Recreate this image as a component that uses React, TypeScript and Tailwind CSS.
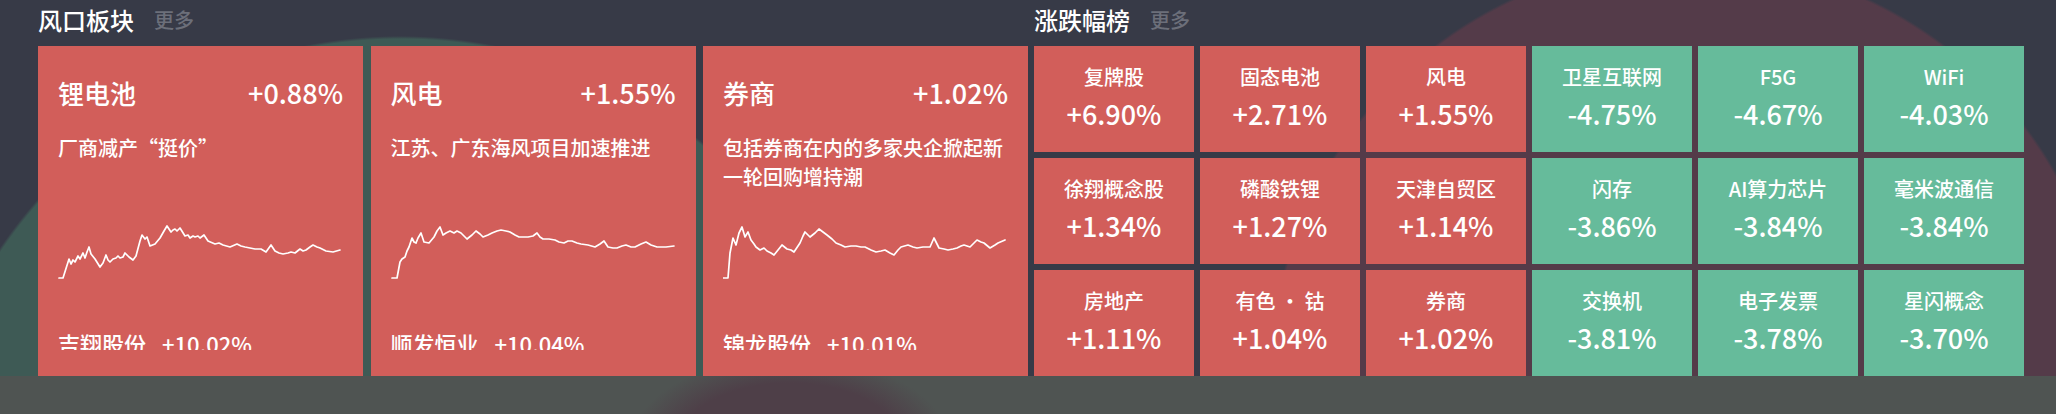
import React from "react";

type Card = {
  name: string;
  pct: string;
  desc: string;
  stock: string;
  stockPct: string;
  pts: [number, number][];
};

const chart1: [number, number][] = [
  [21, 232], [25, 232], [31, 213], [33, 218], [35, 214], [37, 216], [40, 210], [42, 213], [45, 207], [47, 212], [49, 206], [51, 201], [53, 208], [57, 213], [62, 221], [65, 217], [68, 209], [70, 214], [72, 216], [75, 213], [78, 212], [80, 210], [82, 212], [85, 211], [87, 207], [91, 211], [95, 214], [98, 210], [102, 195], [104, 189], [107, 193], [109, 191], [112, 200], [117, 198], [122, 192], [126, 185], [129, 180], [131, 183], [133, 186], [135, 184], [137, 183], [139, 185], [142, 182], [147, 190], [150, 189], [152, 192], [155, 190], [157, 191], [160, 190], [162, 192], [166, 189], [170, 195], [177, 198], [181, 197], [185, 199], [192, 201], [199, 198], [203, 200], [207, 201], [212, 202], [217, 203], [223, 203], [228, 206], [233, 199], [237, 205], [241, 207], [245, 208], [250, 207], [253, 206], [257, 207], [262, 203], [265, 205], [268, 204], [272, 201], [275, 199], [279, 201], [282, 202], [288, 205], [295, 206], [302, 204],
];

const chart2: [number, number][] = [
  [21, 232], [26, 232], [29, 216], [31, 213], [34, 211], [36, 205], [38, 201], [41, 192], [43, 196], [45, 197], [47, 192], [50, 187], [53, 196], [58, 197], [63, 191], [66, 185], [69, 181], [72, 189], [75, 187], [79, 185], [83, 187], [86, 185], [90, 187], [96, 193], [101, 189], [105, 185], [109, 188], [112, 191], [117, 189], [121, 187], [126, 185], [130, 184], [135, 185], [139, 186], [144, 189], [148, 191], [153, 191], [157, 191], [162, 190], [166, 187], [169, 191], [172, 193], [178, 193], [184, 194], [188, 196], [193, 197], [197, 195], [201, 195], [206, 197], [210, 198], [217, 199], [224, 201], [229, 198], [233, 195], [237, 201], [242, 202], [246, 202], [251, 200], [255, 199], [260, 201], [264, 201], [270, 198], [275, 196], [280, 199], [286, 201], [291, 201], [295, 201], [303, 200],
];

const chart3: [number, number][] = [
  [19, 232], [25, 232], [27, 207], [30, 192], [33, 199], [36, 187], [39, 181], [42, 191], [45, 186], [48, 194], [51, 198], [53, 201], [57, 204], [61, 202], [64, 205], [68, 207], [71, 209], [75, 204], [79, 199], [84, 203], [88, 204], [91, 206], [95, 200], [97, 197], [100, 190], [102, 186], [105, 189], [107, 191], [112, 187], [116, 183], [120, 186], [124, 189], [129, 193], [133, 197], [138, 199], [142, 201], [148, 200], [153, 200], [158, 201], [162, 201], [168, 204], [173, 206], [178, 205], [182, 204], [187, 207], [191, 209], [195, 204], [198, 201], [205, 199], [210, 201], [214, 202], [220, 201], [227, 201], [231, 192], [236, 202], [241, 203], [245, 204], [250, 203], [254, 202], [258, 200], [261, 199], [267, 201], [271, 197], [274, 194], [278, 196], [281, 197], [287, 202], [292, 199], [295, 197], [302, 194],
];

const cards: Card[] = [
  { name: "锂电池", pct: "+0.88%", desc: "厂商减产“挺价”", stock: "吉翔股份", stockPct: "+10.02%", pts: chart1 },
  { name: "风电", pct: "+1.55%", desc: "江苏、广东海风项目加速推进", stock: "顺发恒业", stockPct: "+10.04%", pts: chart2 },
  { name: "券商", pct: "+1.02%", desc: "包括券商在内的多家央企掀起新一轮回购增持潮", stock: "锦龙股份", stockPct: "+10.01%", pts: chart3 },
];

type Tile = { name: string; pct: string; up: boolean };

const tiles: Tile[] = [
  { name: "复牌股", pct: "+6.90%", up: true },
  { name: "固态电池", pct: "+2.71%", up: true },
  { name: "风电", pct: "+1.55%", up: true },
  { name: "卫星互联网", pct: "-4.75%", up: false },
  { name: "F5G", pct: "-4.67%", up: false },
  { name: "WiFi", pct: "-4.03%", up: false },
  { name: "徐翔概念股", pct: "+1.34%", up: true },
  { name: "磷酸铁锂", pct: "+1.27%", up: true },
  { name: "天津自贸区", pct: "+1.14%", up: true },
  { name: "闪存", pct: "-3.86%", up: false },
  { name: "AI算力芯片", pct: "-3.84%", up: false },
  { name: "毫米波通信", pct: "-3.84%", up: false },
  { name: "房地产", pct: "+1.11%", up: true },
  { name: "有色 · 钴", pct: "+1.04%", up: true },
  { name: "券商", pct: "+1.02%", up: true },
  { name: "交换机", pct: "-3.81%", up: false },
  { name: "电子发票", pct: "-3.78%", up: false },
  { name: "星闪概念", pct: "-3.70%", up: false },
];

function Spark({ pts }: { pts: [number, number][] }) {
  const d = pts.map(([x, y]) => `${x - 20},${y}`).join(" ");
  return (
    <svg className="block mt-[5px] h-[100px] w-[285px]" viewBox="0 150 285 100">
      <polyline points={d} fill="none" stroke="#ffffff" strokeWidth="1.7" strokeLinejoin="round" strokeLinecap="round" />
    </svg>
  );
}

function SectorCard({ c }: { c: Card }) {
  return (
    <div className="h-[330px] bg-[#d25e5a] px-[20px] pt-[29px] text-white flex flex-col">
      <div className="h-[36px] flex items-center justify-between">
        <span className="text-[26px] leading-[36px]">{c.name}</span>
        <span className="text-[27px] leading-[36px]">{c.pct}</span>
      </div>
      <div className="mt-[22px] h-[58px] text-[20px] leading-[29px]">{c.desc}</div>
      <Spark pts={c.pts} />
      <div className="mt-[32px] h-[22px] overflow-hidden text-[22px] leading-[30px] whitespace-nowrap">
        <span>{c.stock}</span>
        <span className="ml-[16px]">{c.stockPct}</span>
      </div>
    </div>
  );
}

function RankTile({ t }: { t: Tile }) {
  return (
    <div className={`h-[106px] flex flex-col items-center text-white ${t.up ? "bg-[#d25e5a]" : "bg-[#66bb9b]"}`}>
      <div className="mt-[16px] text-[20px] leading-[30px] whitespace-nowrap">{t.name}</div>
      <div className="mt-[4px] text-[27px] leading-[36px]">{t.pct}</div>
    </div>
  );
}

function Header({ title }: { title: string }) {
  return (
    <div className="h-[46px] pt-[5px] flex items-start">
      <span className="text-[24px] leading-[30px] text-white">{title}</span>
      <span className="ml-[20px] text-[20px] leading-[30px] text-[#6c6f7a]">更多</span>
    </div>
  );
}

export default function App() {
  return (
    <div
      className="w-[2056px] h-[414px] overflow-hidden flex flex-col font-medium"
      style={{ fontFamily: '"Noto Sans CJK SC", "Noto Sans", sans-serif' }}
    >
      <div className="h-[376px] pl-[38px] flex gap-[6px] bg-[#373a47] bg-[radial-gradient(circle_at_400px_520px,#3e5a55_0,#3e5a55_481px,transparent_484px),radial-gradient(circle_at_1690px_380px,#543b49_0,#543b49_418px,transparent_421px)]">
        <div className="w-[990px] flex flex-col">
          <Header title="风口板块" />
          <div className="grid grid-cols-3 gap-[7.5px]">
            {cards.map((c) => (
              <SectorCard key={c.name} c={c} />
            ))}
          </div>
        </div>
        <div className="w-[990px] flex flex-col">
          <Header title="涨跌幅榜" />
          <div className="grid grid-cols-6 gap-[6px]">
            {tiles.map((t, i) => (
              <RankTile key={i} t={t} />
            ))}
          </div>
        </div>
      </div>
      <div className="h-[38px] bg-[#4f5452] bg-[radial-gradient(ellipse_160px_90px_at_790px_70px,#4e3f48_0,#4e3f48_70%,transparent_100%)]" />
    </div>
  );
}
